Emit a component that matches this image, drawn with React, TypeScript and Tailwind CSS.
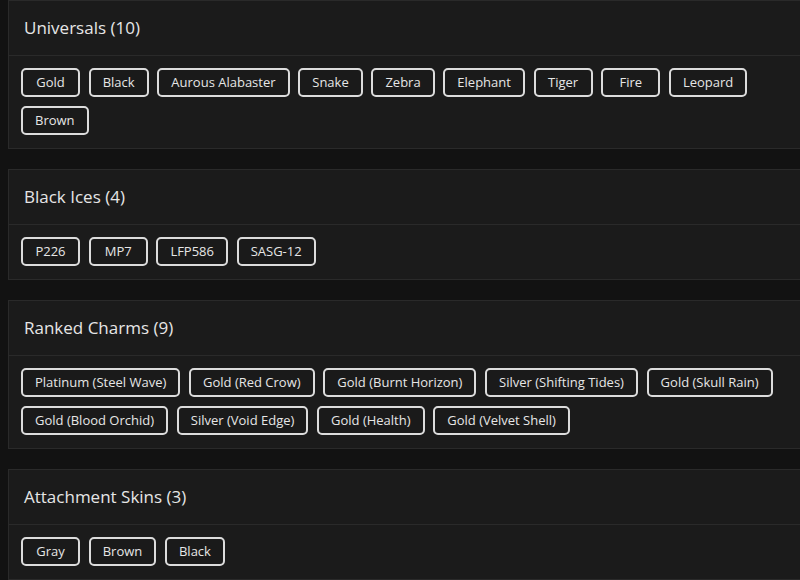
const SECTIONS = [
  {
    title: 'Universals',
    items: ['Gold', 'Black', 'Aurous Alabaster', 'Snake', 'Zebra', 'Elephant', 'Tiger', 'Fire', 'Leopard', 'Brown'],
  },
  {
    title: 'Black Ices',
    items: ['P226', 'MP7', 'LFP586', 'SASG-12'],
  },
  {
    title: 'Ranked Charms',
    items: [
      'Platinum (Steel Wave)',
      'Gold (Red Crow)',
      'Gold (Burnt Horizon)',
      'Silver (Shifting Tides)',
      'Gold (Skull Rain)',
      'Gold (Blood Orchid)',
      'Silver (Void Edge)',
      'Gold (Health)',
      'Gold (Velvet Shell)',
    ],
  },
  {
    title: 'Attachment Skins',
    items: ['Gray', 'Brown', 'Black'],
  },
];

export default function App() {
  return (
    <div
      className="min-h-screen bg-[#121212] pl-2 overflow-x-hidden"
      style={{ fontFamily: '"Open Sans", "Liberation Sans", sans-serif' }}
    >
      {SECTIONS.map((s) => (
        <section key={s.title} className="mb-5 -mr-4 bg-[#1b1b1b] border border-[#2a2a2a]">
          {/* Header */}
          <div className="h-[55px] flex items-center px-[15px] border-b border-[#2a2a2a]">
            <h2 className="text-[17px] font-medium text-[#e6e6e6]">
              {s.title} ({s.items.length})
            </h2>
          </div>
          {/* Items */}
          <div className="px-3 pt-3 pb-[13px] flex flex-wrap gap-x-[8.7px] gap-y-[9px]">
            {s.items.map((it) => (
              <button
                key={it}
                className="min-w-[59px] h-[29px] px-3 border-2 border-[#dcdcdc] rounded-[5px] text-[13px] font-medium text-[#e6e6e6] bg-[#1a1a1a]"
              >
                {it}
              </button>
            ))}
          </div>
        </section>
      ))}
    </div>
  );
}
